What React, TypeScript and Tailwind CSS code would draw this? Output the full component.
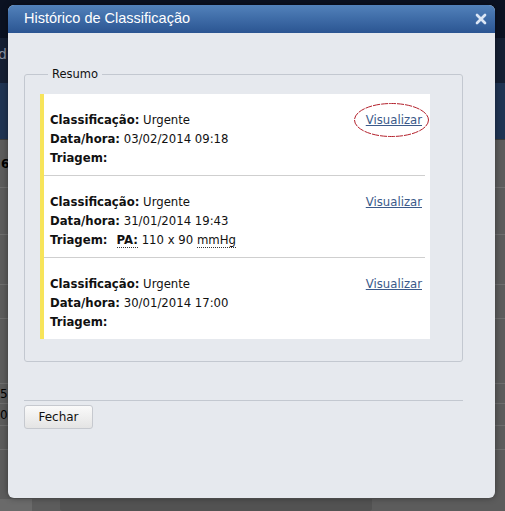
import { X } from "lucide-react";

const font = { fontFamily: '"DejaVu Sans", Verdana, sans-serif' };

type Registro = {
  data: string;
  triagem?: boolean;
  marcado?: boolean;
};

const registros: Registro[] = [
  { data: "03/02/2014 09:18", marcado: true },
  { data: "31/01/2014 19:43", triagem: true },
  { data: "30/01/2014 17:00" },
];

function Backdrop() {
  return (
    <div className="flex h-[511px] w-[505px] flex-col bg-[#5c5c5c]">
      <div className="h-[38px] bg-[#0b1222]" />
      <div className="flex h-[45px] items-center bg-[#151f33] text-[14px] text-[#8a93a3]">
        <span className="-ml-[2px] -mt-[12px]">di</span>
      </div>
      <div className="h-[57px] border-b border-[#3a3a3a] bg-[#1f3453]" />
      <div className="flex h-[48px] items-center border-b border-[#6e6e6e] text-[12px] font-bold text-black">
        <span className="ml-[1px]">6</span>
      </div>
      <div className="h-[47px] border-b border-[#6e6e6e]" />
      <div className="h-[50px] border-b border-[#6e6e6e]" />
      <div className="h-[34px] border-b border-[#6e6e6e]" />
      <div className="h-[65px] border-b border-[#6e6e6e]" />
      <div className="flex h-[20px] items-center border-b border-[#6e6e6e] text-[12px] text-black">
        <span>5</span>
      </div>
      <div className="flex h-[22px] items-center border-b border-[#6e6e6e] text-[12px] text-black">
        <span>0</span>
      </div>
      <div className="h-[24px] border-b border-[#6e6e6e]" />
      <div className="flex flex-1 items-end gap-[28px]">
        <div className="h-[12px] w-[32px] bg-[#6a6a6a]" />
        <div className="h-[12px] w-[312px] rounded-b-[3px] bg-[#525252]" />
      </div>
    </div>
  );
}

function Linha({ r }: { r: Registro }) {
  return (
    <div className="relative flex h-[81px] justify-between pl-[6px] pr-[3px] pt-[17px] text-[11.7px] leading-[19px] text-[#111]">
      <div>
        <div>
          <b>Classificação:</b> Urgente
        </div>
        <div>
          <b>Data/hora:</b> {r.data}
        </div>
        <div>
          <b>Triagem:</b>
          {r.triagem && (
            <>
              <b className="ml-[9px] border-b border-dotted border-[#333]">PA:</b>{" "}
              110 x 90{" "}
              <span className="border-b border-dotted border-[#333]">mmHg</span>
            </>
          )}
        </div>
      </div>
      <div className="relative h-fit">
        <a href="#" className="text-[#3b5a8a] underline">
          Visualizar
        </a>
        {r.marcado && (
          <svg
            className="pointer-events-none absolute -left-[13px] -top-[9px]"
            width="77"
            height="36"
            viewBox="0 0 77 36"
          >
            <ellipse
              cx="38.5"
              cy="18"
              rx="37"
              ry="16.5"
              fill="none"
              stroke="#b3212c"
              strokeWidth="1"
              strokeDasharray="7 1"
            />
          </svg>
        )}
      </div>
    </div>
  );
}

export default function App() {
  return (
    <div className="relative h-[511px] w-[505px] overflow-hidden" style={font}>
      <Backdrop />
      <div className="absolute left-[8px] top-[5px] flex h-[493px] w-[487px] flex-col overflow-hidden rounded-[6px] bg-[#e6e9ee] shadow-[0_0_6px_rgba(0,0,0,0.4)]">
        <div className="flex h-[28px] shrink-0 items-center justify-between bg-gradient-to-b from-[#5282bb] to-[#2b5592] pl-[16px] pr-[6px]">
          <span className="font-['Liberation_Sans',Arial,sans-serif] text-[14.5px] text-white">
            Histórico de Classificação
          </span>
          <X size={16} strokeWidth={4} className="text-[#dbe6f5]" />
        </div>
        <div className="px-[16px] pt-[35px]">
          <fieldset className="w-[439px] rounded-[3px] border border-[#c3c8d0] px-[15px] pb-[22px] pt-[13px]">
            <legend className="ml-[8px] px-[4px] text-[11.5px] leading-[13px] text-[#111]">
              Resumo
            </legend>
            <div className="w-[390px] border-l-[4px] border-[#f7e45a] bg-white pr-[5px]">
              {registros.map((r, i) => (
                <div
                  key={r.data}
                  className={i < registros.length - 1 ? "border-b border-[#cfcfcf]" : ""}
                >
                  <Linha r={r} />
                </div>
              ))}
            </div>
          </fieldset>
          <div className="mt-[38px] w-[439px] border-t border-[#c3c8d0]" />
          <button className="mt-[4px] h-[24px] w-[69px] rounded-[3px] border border-[#c6c9cf] bg-gradient-to-b from-[#fafafa] to-[#e4e4e4] text-[12px] text-[#111]">
            Fechar
          </button>
        </div>
      </div>
    </div>
  );
}
